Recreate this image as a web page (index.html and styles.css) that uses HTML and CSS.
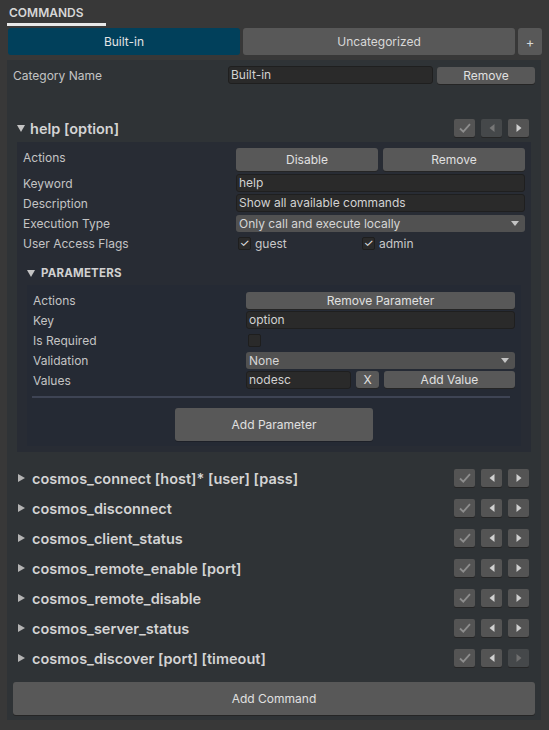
FILE: index.html
```html
<!DOCTYPE html>
<html>
<head>
<meta charset="utf-8">
<link rel="stylesheet" href="styles.css">
</head>
<body>
<div class="title-tab">COMMANDS</div>
<div class="tabs">
  <div class="tab active">Built-in</div>
  <div class="tab">Uncategorized</div>
  <div class="tab plus">+</div>
</div>
<div class="panel">
  <div class="cat-row">
    <div class="cat-label">Category Name</div>
    <div class="input cat-input">Built-in</div>
    <div class="btn cat-remove">Remove</div>
  </div>

  <div class="item open">
    <div class="head">
      <span class="tri down"></span>
      <span class="name">help [option]</span>
      <div class="icons">
        <span class="ib"><svg width="12" height="10" viewBox="0 0 12 10"><path d="M1 5.5 L4.3 8.6 L11 1.2" fill="none" stroke="#8d8d8d" stroke-width="1.8"/></svg></span>
        <span class="ib dim"><svg width="8" height="10" viewBox="0 0 8 10"><path d="M6.5 1 L1.5 5 L6.5 9 Z" fill="#777777"/></svg></span>
        <span class="ib"><svg width="8" height="10" viewBox="0 0 8 10"><path d="M1.5 1 L6.5 5 L1.5 9 Z" fill="#d0d0d0"/></svg></span>
      </div>
    </div>
    <div class="body">
      <div class="row r-actions">
        <div class="lbl">Actions</div>
        <div class="fields two">
          <div class="btn">Disable</div>
          <div class="btn">Remove</div>
        </div>
      </div>
      <div class="row">
        <div class="lbl">Keyword</div>
        <div class="input grow">help</div>
      </div>
      <div class="row">
        <div class="lbl">Description</div>
        <div class="input grow">Show all available commands</div>
      </div>
      <div class="row">
        <div class="lbl">Execution Type</div>
        <div class="dropdown grow">Only call and execute locally<span class="caret"></span></div>
      </div>
      <div class="row flag-row">
        <div class="lbl">User Access Flags</div>
        <div class="fields flags">
          <div class="flag"><span class="cb checked">&#10003;</span>guest</div>
          <div class="flag"><span class="cb checked">&#10003;</span>admin</div>
        </div>
      </div>

      <div class="params">
        <div class="phead"><span class="tri down small"></span>PARAMETERS</div>
        <div class="pbody">
          <div class="row prow">
            <div class="lbl">Actions</div>
            <div class="btn grow sm">Remove Parameter</div>
          </div>
          <div class="row prow">
            <div class="lbl">Key</div>
            <div class="input grow">option</div>
          </div>
          <div class="row prow">
            <div class="lbl">Is Required</div>
            <div class="fields"><span class="cb"></span></div>
          </div>
          <div class="row prow">
            <div class="lbl">Validation</div>
            <div class="dropdown grow">None<span class="caret"></span></div>
          </div>
          <div class="row prow">
            <div class="lbl">Values</div>
            <div class="fields vals">
              <div class="input val">nodesc</div>
              <div class="btn x">X</div>
              <div class="btn addval">Add Value</div>
            </div>
          </div>
          <div class="sep"></div>
          <div class="addp-wrap"><div class="btn addp">Add Parameter</div></div>
        </div>
      </div>
    </div>
  </div>

  <div class="item"><div class="head"><span class="tri"></span><span class="name">cosmos_connect [host]* [user] [pass]</span><div class="icons"><span class="ib"><svg width="12" height="10" viewBox="0 0 12 10"><path d="M1 5.5 L4.3 8.6 L11 1.2" fill="none" stroke="#8d8d8d" stroke-width="1.8"/></svg></span><span class="ib"><svg width="8" height="10" viewBox="0 0 8 10"><path d="M6.5 1 L1.5 5 L6.5 9 Z" fill="#d0d0d0"/></svg></span><span class="ib"><svg width="8" height="10" viewBox="0 0 8 10"><path d="M1.5 1 L6.5 5 L1.5 9 Z" fill="#d0d0d0"/></svg></span></div></div></div>
  <div class="item"><div class="head"><span class="tri"></span><span class="name">cosmos_disconnect</span><div class="icons"><span class="ib"><svg width="12" height="10" viewBox="0 0 12 10"><path d="M1 5.5 L4.3 8.6 L11 1.2" fill="none" stroke="#8d8d8d" stroke-width="1.8"/></svg></span><span class="ib"><svg width="8" height="10" viewBox="0 0 8 10"><path d="M6.5 1 L1.5 5 L6.5 9 Z" fill="#d0d0d0"/></svg></span><span class="ib"><svg width="8" height="10" viewBox="0 0 8 10"><path d="M1.5 1 L6.5 5 L1.5 9 Z" fill="#d0d0d0"/></svg></span></div></div></div>
  <div class="item"><div class="head"><span class="tri"></span><span class="name">cosmos_client_status</span><div class="icons"><span class="ib"><svg width="12" height="10" viewBox="0 0 12 10"><path d="M1 5.5 L4.3 8.6 L11 1.2" fill="none" stroke="#8d8d8d" stroke-width="1.8"/></svg></span><span class="ib"><svg width="8" height="10" viewBox="0 0 8 10"><path d="M6.5 1 L1.5 5 L6.5 9 Z" fill="#d0d0d0"/></svg></span><span class="ib"><svg width="8" height="10" viewBox="0 0 8 10"><path d="M1.5 1 L6.5 5 L1.5 9 Z" fill="#d0d0d0"/></svg></span></div></div></div>
  <div class="item"><div class="head"><span class="tri"></span><span class="name">cosmos_remote_enable [port]</span><div class="icons"><span class="ib"><svg width="12" height="10" viewBox="0 0 12 10"><path d="M1 5.5 L4.3 8.6 L11 1.2" fill="none" stroke="#8d8d8d" stroke-width="1.8"/></svg></span><span class="ib"><svg width="8" height="10" viewBox="0 0 8 10"><path d="M6.5 1 L1.5 5 L6.5 9 Z" fill="#d0d0d0"/></svg></span><span class="ib"><svg width="8" height="10" viewBox="0 0 8 10"><path d="M1.5 1 L6.5 5 L1.5 9 Z" fill="#d0d0d0"/></svg></span></div></div></div>
  <div class="item"><div class="head"><span class="tri"></span><span class="name">cosmos_remote_disable</span><div class="icons"><span class="ib"><svg width="12" height="10" viewBox="0 0 12 10"><path d="M1 5.5 L4.3 8.6 L11 1.2" fill="none" stroke="#8d8d8d" stroke-width="1.8"/></svg></span><span class="ib"><svg width="8" height="10" viewBox="0 0 8 10"><path d="M6.5 1 L1.5 5 L6.5 9 Z" fill="#d0d0d0"/></svg></span><span class="ib"><svg width="8" height="10" viewBox="0 0 8 10"><path d="M1.5 1 L6.5 5 L1.5 9 Z" fill="#d0d0d0"/></svg></span></div></div></div>
  <div class="item"><div class="head"><span class="tri"></span><span class="name">cosmos_server_status</span><div class="icons"><span class="ib"><svg width="12" height="10" viewBox="0 0 12 10"><path d="M1 5.5 L4.3 8.6 L11 1.2" fill="none" stroke="#8d8d8d" stroke-width="1.8"/></svg></span><span class="ib"><svg width="8" height="10" viewBox="0 0 8 10"><path d="M6.5 1 L1.5 5 L6.5 9 Z" fill="#d0d0d0"/></svg></span><span class="ib"><svg width="8" height="10" viewBox="0 0 8 10"><path d="M1.5 1 L6.5 5 L1.5 9 Z" fill="#d0d0d0"/></svg></span></div></div></div>
  <div class="item"><div class="head"><span class="tri"></span><span class="name">cosmos_discover [port] [timeout]</span><div class="icons"><span class="ib"><svg width="12" height="10" viewBox="0 0 12 10"><path d="M1 5.5 L4.3 8.6 L11 1.2" fill="none" stroke="#8d8d8d" stroke-width="1.8"/></svg></span><span class="ib"><svg width="8" height="10" viewBox="0 0 8 10"><path d="M6.5 1 L1.5 5 L6.5 9 Z" fill="#d0d0d0"/></svg></span><span class="ib dim"><svg width="8" height="10" viewBox="0 0 8 10"><path d="M1.5 1 L6.5 5 L1.5 9 Z" fill="#6f6f6f"/></svg></span></div></div></div>

  <div class="btn addcmd">Add Command</div>
</div>
</body>
</html>
```
FILE: styles.css
```css
* { box-sizing: border-box; }
body {
  margin: 0;
  background: #383838;
  font-family: Inter, "Noto Sans", sans-serif;
  font-size: 12px;
  color: #c4c4c4;
  width: 549px;
  height: 730px;
  overflow: hidden;
}
.title-tab {
  margin-left: 7px;
  width: 99px;
  padding: 6px 0 0 2px;
  height: 26px;
  font-weight: 600;
  font-size: 12px;
  color: #d6d6d6;
  border-bottom: 3px solid #e8e8e8;
  line-height: 14px;
}
.tabs {
  display: flex;
  gap: 3px;
  margin: 2px 0 0 8px;
  width: 534px;
  height: 27px;
}
.tab {
  flex: 1;
  background: #585858;
  border-radius: 3px;
  display: flex;
  align-items: center;
  justify-content: center;
  color: #d8d8d8;
  font-size: 12px;
}
.tab.active { background: #01405b; color: #e4e4e4; flex: 0 0 232px; }
.tab.plus { flex: 0 0 24px; font-size: 13px; }

.panel {
  margin: 5px 0 0 7px;
  width: 534px;
  height: 660px;
  background: #2f3336;
  padding: 6px 6px 0 6px;
  display: flex;
  flex-direction: column;
}
.cat-row {
  display: flex;
  align-items: center;
  height: 18px;
}
.cat-label { width: 215px; }
.input {
  background: #2a2a2a;
  border: 1px solid #1f1f1f;
  border-radius: 3px;
  color: #d2d2d2;
  height: 18px;
  line-height: 16px;
  padding-left: 2px;
  font-size: 12px;
}
.cat-input { width: 205px; }
.btn {
  background: #585858;
  border-radius: 3px;
  color: #e0e0e0;
  display: flex;
  align-items: center;
  justify-content: center;
  font-size: 12px;
  box-shadow: 0 1px 0 #252525;
}
.cat-remove { width: 98px; height: 17px; margin-left: 4px; }

.item { margin: 8px 0 0 4px; width: 514px; }
.item.open { margin-top: 33px; }
.head {
  height: 22px;
  display: flex;
  align-items: center;
}
.tri {
  width: 0; height: 0;
  border-top: 4.5px solid transparent;
  border-bottom: 4.5px solid transparent;
  border-left: 7px solid #b4b4b4;
  margin-right: 7px;
  margin-left: 1px;
}
.tri.down {
  border-left: 4.5px solid transparent;
  border-right: 4.5px solid transparent;
  border-top: 7px solid #c4c4c4;
  border-bottom: 0;
  margin-left: 0;
  margin-right: 5px;
}
.name {
  font-weight: 600;
  font-size: 14.5px;
  color: #d4d4d4;
  flex: 1;
}
.icons { display: flex; gap: 6px; margin-right: 2px; }
.ib {
  width: 21px;
  height: 18px;
  background: #545454;
  border-radius: 2px;
  display: flex;
  align-items: center;
  justify-content: center;
  box-shadow: 0 1px 0 #262626;
}
.ib.dim { background: #45484a; }

.body {
  margin-top: 3px;
  margin-bottom: 7px;
  background: #282c34;
  padding: 6px 6px 6px 6px;
  width: 514px;
}
.row {
  display: flex;
  align-items: center;
  height: 18px;
  margin-bottom: 2px;
}
.row.r-actions { height: 23px; margin-bottom: 3px; align-items: flex-start; }
.r-actions .lbl { padding-top: 2px; }
.lbl { width: 213px; flex: 0 0 213px; }
.grow { flex: 1; }
.fields { flex: 1; display: flex; }
.two { gap: 5px; height: 23px; }
.two .btn { flex: 1; height: 23px; }
.dropdown {
  background: #515151;
  border-radius: 3px;
  height: 17px;
  display: flex;
  align-items: center;
  padding-left: 3px;
  color: #d6d6d6;
  position: relative;
}
.caret {
  position: absolute;
  right: 6px;
  top: 6px;
  width: 0; height: 0;
  border-left: 4px solid transparent;
  border-right: 4px solid transparent;
  border-top: 5px solid #c4c4c4;
}
.flags { height: 18px; }
.flag { width: 124px; display: flex; align-items: center; color: #c8c8c8; }
.cb {
  width: 13px;
  height: 13px;
  background: #2a2a2a;
  border: 1px solid #1e1e1e;
  border-radius: 2px;
  display: inline-flex;
  align-items: center;
  justify-content: center;
  font-size: 11px;
  color: #e8e8e8;
  margin: 0 4px 0 2px;
  line-height: 1;
}
.flag-row { height: 19px; }

.params { margin: 12px 4px 0 4px; }
.phead {
  height: 16px;
  display: flex;
  align-items: center;
  font-weight: 700;
  font-size: 11.5px;
  color: #d0d0d0;
  letter-spacing: 0.2px;
  margin-left: 0;
}
.tri.small { margin-right: 6px; }
.pbody {
  margin-top: 4px;
  background: #252a34;
  padding: 6px 6px 5px 6px;
}
.prow { margin-bottom: 2px; }
.btn.sm { height: 17px; }
.vals { gap: 5px; height: 18px; }
.val { width: 105px; }
.x { width: 23px; height: 17px; }
.addval { flex: 1; height: 17px; }
.sep {
  height: 2px;
  background: #3e4454;
  margin: 7px 5px 0 -1px;
}
.addp-wrap { display: flex; justify-content: center; margin-top: 10px; }
.addp { width: 198px; height: 33px; box-shadow: 0 1px 0 #1d2028; }

.addcmd {
  margin-top: 13px;
  height: 33px;
  width: 522px;
}
```
